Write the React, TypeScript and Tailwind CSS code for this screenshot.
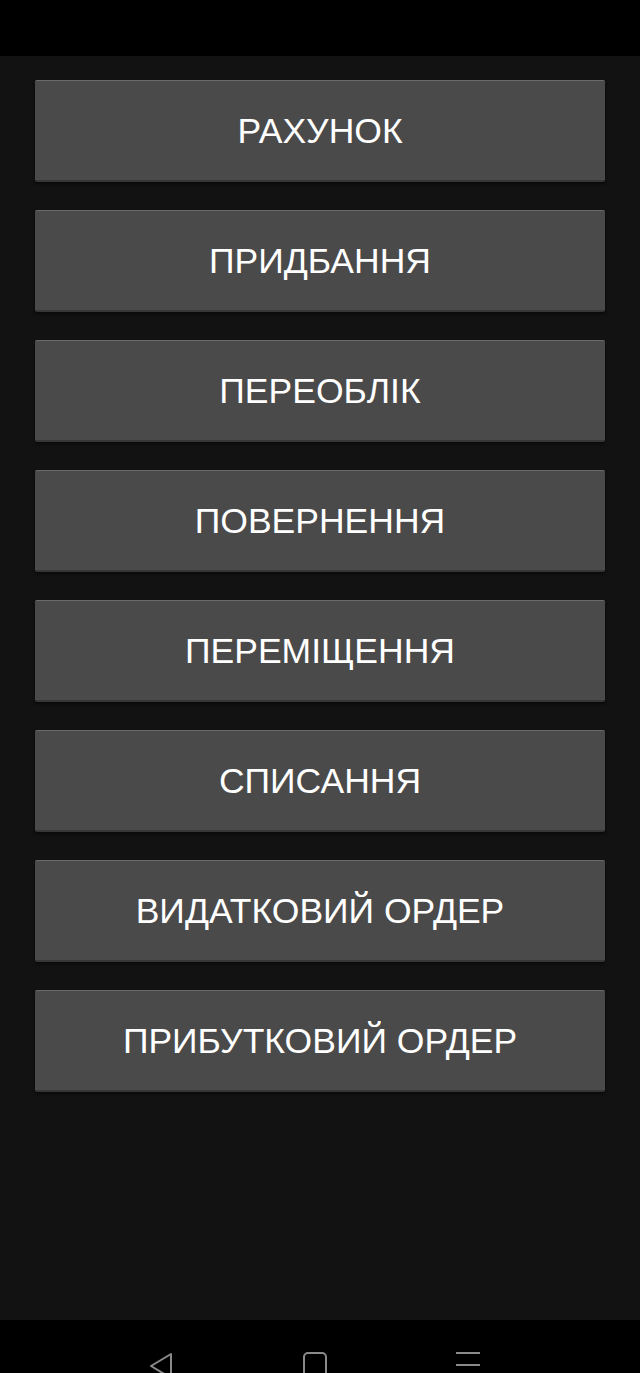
import React from 'react';

const items = [
    'РАХУНОК',
    'ПРИДБАННЯ',
    'ПЕРЕОБЛІК',
    'ПОВЕРНЕННЯ',
    'ПЕРЕМІЩЕННЯ',
    'СПИСАННЯ',
    'ВИДАТКОВИЙ ОРДЕР',
    'ПРИБУТКОВИЙ ОРДЕР',
];

const App: React.FC = () => {
    return (
        <div className="flex h-[1373px] w-[640px] flex-col overflow-hidden bg-black font-['Liberation_Sans','Roboto',sans-serif]">
            {/* status bar */}
            <div className="h-[56px] shrink-0 bg-black" />

            {/* menu */}
            <div className="flex flex-1 flex-col gap-[28px] bg-[#121212] px-[35px] pt-[24px]">
                {items.map((label) => (
                    <button
                        key={label}
                        className="flex h-[102px] w-[570px] items-center justify-center rounded-[2px] border-t border-b-2 border-t-[#6a6a6a] border-b-[#363636] bg-[#4a4a4a] pt-[3px] text-[35.5px] text-white shadow-[0_2px_3px_rgba(0,0,0,0.5)]"
                    >
                        {label}
                    </button>
                ))}
            </div>

            {/* nav bar */}
            <div className="relative h-[53px] shrink-0 bg-black">
                <svg className="absolute left-[149px] top-[32px]" width="26" height="30" viewBox="0 0 26 30" fill="none" stroke="#8a8a8a" strokeWidth="2" strokeLinejoin="round">
                    <path d="M22 2 L2 14 L22 26 Z" />
                </svg>
                <svg className="absolute left-[302px] top-[31px]" width="26" height="30" viewBox="0 0 26 30" fill="none" stroke="#8a8a8a" strokeWidth="2">
                    <rect x="2" y="2" width="22" height="24" rx="4" />
                </svg>
                <svg className="absolute left-[455px] top-[31px]" width="26" height="30" viewBox="0 0 26 30" fill="none" stroke="#8a8a8a" strokeWidth="2">
                    <path d="M1 2 H25 M1 14 H25 M1 26 H25" />
                </svg>
            </div>
        </div>
    );
};

export default App;
